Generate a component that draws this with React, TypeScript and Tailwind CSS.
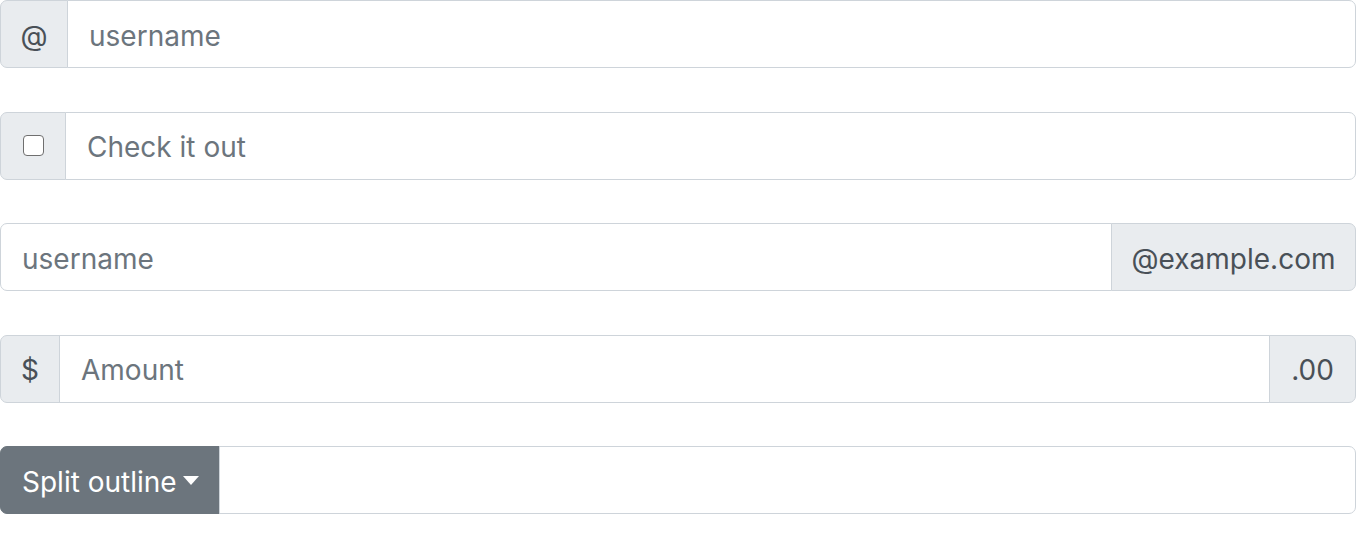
const font = { fontFamily: 'Inter, "Noto Sans", sans-serif' };

function Addon({ children, className = '' }: { children: React.ReactNode; className?: string }) {
  return (
    <div
      className={`flex items-center justify-center bg-[#e9ecef] border border-[#ced4da] text-[#495057] text-[28px] pt-[3px] px-[22px] ${className}`}
    >
      {children}
    </div>
  );
}

function Field({ placeholder, className = '' }: { placeholder?: string; className?: string }) {
  return (
    <input
      type="text"
      placeholder={placeholder}
      className={`flex-1 min-w-0 h-full bg-white border border-[#ced4da] text-[28px] text-[#495057] placeholder:text-[#6c757d] pt-[3px] px-[21px] outline-none ${className}`}
    />
  );
}

export default function App() {
  return (
    <div className="w-[1356px] flex flex-col gap-[43.5px]" style={font}>
      <div className="flex h-[68px]">
        <Addon className="w-[68px] rounded-l-[7px]">@</Addon>
        <Field placeholder="username" className="-ml-px rounded-r-[7px]" />
      </div>

      <div className="flex h-[68px]">
        <div className="flex items-center justify-center w-[66px] bg-[#e9ecef] border border-[#ced4da] rounded-l-[7px]">
          <span
            role="checkbox"
            aria-checked="false"
            className="block w-[21px] h-[21px] bg-white border-[1.5px] border-[#6f6f6f] rounded-[4px]"
          />
        </div>
        <Field placeholder="Check it out" className="-ml-px rounded-r-[7px]" />
      </div>

      <div className="flex h-[68px]">
        <Field placeholder="username" className="rounded-l-[7px]" />
        <Addon className="w-[245px] -ml-px rounded-r-[7px]">@example.com</Addon>
      </div>

      <div className="flex h-[68px]">
        <Addon className="w-[60px] rounded-l-[7px]">$</Addon>
        <Field placeholder="Amount" className="-ml-px" />
        <Addon className="w-[87px] -ml-px rounded-r-[7px]">.00</Addon>
      </div>

      <div className="flex h-[68px]">
        <button className="flex items-center gap-[6px] w-[220px] h-full bg-[#6c757d] border border-[#6c757d] text-white text-[28px] pt-[3px] pl-[21px] rounded-l-[7px]">
          <span>Split outline</span>
          <span className="-mt-[2px] border-t-[9px] border-t-white border-x-[8px] border-x-transparent" />
        </button>
        <Field className="-ml-px rounded-r-[7px]" />
      </div>
    </div>
  );
}
